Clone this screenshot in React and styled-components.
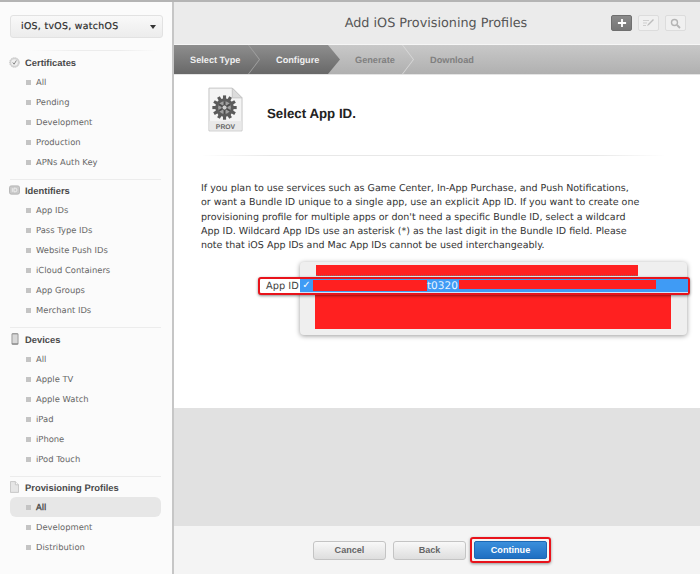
import React from 'react';
import styled, { createGlobalStyle } from 'styled-components';

const GlobalStyle = createGlobalStyle`
  html, body { margin: 0; padding: 0; background: #fff; }
  * { box-sizing: border-box; }
  body { font-family: "DejaVu Sans", "Liberation Sans", sans-serif; text-rendering: geometricPrecision; }
`;

const boldFont = '"Liberation Sans", Arial, sans-serif';

const sections = [
  { name: 'Certificates', icon: 'cert', top: 1, items: ['All', 'Pending', 'Development', 'Production', 'APNs Auth Key'] },
  { name: 'Identifiers', icon: 'id', top: 0, items: ['App IDs', 'Pass Type IDs', 'Website Push IDs', 'iCloud Containers', 'App Groups', 'Merchant IDs'] },
  { name: 'Devices', icon: 'device', top: 1, items: ['All', 'Apple TV', 'Apple Watch', 'iPad', 'iPhone', 'iPod Touch'] },
  { name: 'Provisioning Profiles', icon: 'doc', top: 0, items: ['All', 'Development', 'Distribution'], active: 0 },
];

function SectionIcon({ kind }) {
  if (kind === 'cert') {
    return (
      <svg width="11" height="11" viewBox="0 0 14 14">
        <circle cx="7" cy="7" r="6.2" fill="#d4d4d4" stroke="#c0c0c0" strokeDasharray="1.6 1" />
        <circle cx="7" cy="7" r="4.2" fill="#f0f0f0" />
        <path d="M4.8 7l1.7 2.2L9.4 4.4" fill="none" stroke="#777" strokeWidth="1.1" />
      </svg>
    );
  }
  if (kind === 'id') {
    return (
      <svg width="11" height="10" viewBox="0 0 12 10">
        <rect x="0.5" y="0.5" width="11" height="9" rx="2" fill="#cacaca" stroke="#b4b4b4" />
        <path d="M3.6 3v4M5.4 3v4h1.3a2 2 0 0 0 0-4z" fill="none" stroke="#f4f4f4" strokeWidth="0.9" />
      </svg>
    );
  }
  if (kind === 'device') {
    return (
      <svg width="8" height="12" viewBox="0 0 8 13">
        <rect x="0.3" y="0.3" width="7.4" height="12.4" rx="1.3" fill="#808080" />
        <rect x="1.1" y="1.4" width="5.8" height="9.8" fill="#d8d8d8" />
      </svg>
    );
  }
  return (
    <svg width="9" height="12" viewBox="0 0 10 13">
      <path d="M0.5 0.5h5.5l3.5 3.5v8.5h-9z" fill="#e6e6e6" stroke="#c4c4c4" />
      <path d="M6 0.5v3.5h3.5" fill="#f6f6f6" stroke="#c4c4c4" />
    </svg>
  );
}

function ProvIcon() {
  const teeth = Array.from({ length: 12 }, (_, i) => i * 30);
  return (
    <svg width="35" height="45" viewBox="0 0 36 46">
      <path d="M1 1h24l10 10v34H1z" fill="#f4f4f4" stroke="#c4c4c4" />
      <path d="M25 1v10h10z" fill="#dcdcdc" stroke="#c4c4c4" />
      <g transform="translate(17 21)">
        {teeth.map(a => (
          <rect key={a} x="-1.6" y="-12.5" width="3.2" height="5" fill="#5a5a5a" transform={`rotate(${a})`} />
        ))}
        <circle r="9.6" fill="#5c5c5c" />
        <circle r="6.6" fill="#a0a0a0" />
        <path d="M0-6.6V6.6M-5.7-3.3L5.7 3.3M-5.7 3.3L5.7-3.3" stroke="#4e4e4e" strokeWidth="2" />
        <circle r="2.6" fill="#cfcfcf" stroke="#555" />
      </g>
      <rect x="1.5" y="35" width="33" height="9.5" fill="#e9e9e9" />
      <text x="18" y="43" textAnchor="middle" fontSize="7" fontWeight="700" fill="#666" fontFamily="Liberation Sans, sans-serif">PROV</text>
    </svg>
  );
}

export default function App() {
  return (
    <Page>
      <GlobalStyle />
      <Sidebar>
        <Select>
          <span>iOS, tvOS, watchOS</span>
          <Caret />
        </Select>
        <SelectRule />
        {sections.map(s => (
          <Section key={s.name} $top={s.top}>
            <SectionHead>
              <IconSlot><SectionIcon kind={s.icon} /></IconSlot>
              {s.name}
            </SectionHead>
            {s.items.map((item, i) => (
              <NavItem key={item} $active={s.active === i}>
                <Bullet />
                {item}
              </NavItem>
            ))}
          </Section>
        ))}
      </Sidebar>

      <Main>
        <Header>
          <Title>Add iOS Provisioning Profiles</Title>
          <Tools>
            <ToolButton $on>
              <svg width="10" height="10" viewBox="0 0 11 11"><path d="M5.5 1v9M1 5.5h9" stroke="#fff" strokeWidth="2" /></svg>
            </ToolButton>
            <ToolButton>
              <svg width="13" height="10" viewBox="0 0 13 10"><path d="M1 2.5h6M1 5h4M1 7.5h3" stroke="#cfcfcf" /><path d="M5 8l1-2 5-5 1 1-5 5z" fill="#bdbdbd" /></svg>
            </ToolButton>
            <ToolButton>
              <svg width="11" height="11" viewBox="0 0 11 11"><circle cx="4.5" cy="4.5" r="3" fill="none" stroke="#b4b4b4" strokeWidth="1.4" /><path d="M7 7l3 3" stroke="#b4b4b4" strokeWidth="1.8" /></svg>
            </ToolButton>
          </Tools>
        </Header>

        <Steps>
          <DoneSteps>
            <Step $w={86} $done>Select Type<Chevron $tone="#a0a0a0" /></Step>
            <Step $w={80} $done>Configure</Step>
          </DoneSteps>
          <Step $w={74} $pad={15}>Generate<Chevron $tone="#d8d8d8" /></Step>
          <Step $w={90}>Download</Step>
        </Steps>

        <Content>
          <Intro>
            <ProvIcon />
            <Heading>Select App ID.</Heading>
          </Intro>
          <FadeRule />
          <Copy>
            If you plan to use services such as Game Center, In-App Purchase, and Push Notifications,<br />
            or want a Bundle ID unique to a single app, use an explicit App ID. If you want to create one<br />
            provisioning profile for multiple apps or don't need a specific Bundle ID, select a wildcard<br />
            App ID. Wildcard App IDs use an asterisk (*) as the last digit in the Bundle ID field. Please<br />
            note that iOS App IDs and Mac App IDs cannot be used interchangeably.
          </Copy>
          <Popup>
            <TopRedaction />
            <BottomRedaction />
          </Popup>
          <FieldMark>
            <FieldLabel>App ID</FieldLabel>
            <Option>
              <Tick>✓</Tick>
              <Redact $w={114} />
              <OptionText>t0320</OptionText>
              <Redact $w={197} />
            </Option>
          </FieldMark>
        </Content>

        <GrayBand />

        <Footer>
          <FooterButton>Cancel</FooterButton>
          <FooterButton>Back</FooterButton>
          <ContinueMark>
            <ContinueButton>Continue</ContinueButton>
          </ContinueMark>
        </Footer>
      </Main>
    </Page>
  );
}

const Page = styled.div`
  display: grid;
  grid-template-columns: 174px 1fr;
  grid-template-rows: minmax(0, 1fr);
  width: 700px;
  height: 574px;
  overflow: hidden;
  border-top: 2px solid #b4b4b4;
`;

const Sidebar = styled.aside`
  background: #fbfbfb;
  border-right: 2px solid #c6c6c6;
  padding: 13px 11px 0 10px;
  overflow: hidden;
`;

const Select = styled.div`
  display: flex;
  align-items: center;
  justify-content: space-between;
  height: 23px;
  margin-right: -2px;
  padding: 0 6px 0 10px;
  border: 1px solid #e2e2e2;
  border-radius: 3px;
  background: linear-gradient(#f9f9f9, #ececec);
  font-size: 9.3px;
  letter-spacing: 0.35px;
  color: #2c2c2c;
  -webkit-text-stroke: 0.2px #2c2c2c;
`;

const Caret = styled.i`
  width: 0;
  height: 0;
  border-left: 3.5px solid transparent;
  border-right: 3.5px solid transparent;
  border-top: 4px solid #333;
`;

const SelectRule = styled.div`
  height: 1px;
  margin: 12px 4px 0 20px;
  background: linear-gradient(90deg, #fbfbfb, #ececec 40%, #ececec 70%, #fbfbfb);
`;

const Section = styled.section`
  margin-top: ${p => p.$top}px;
  padding-bottom: 7px;
  border-bottom: 1px solid #ececec;
  &:last-child { border-bottom: 0; }
`;

const SectionHead = styled.div`
  display: flex;
  align-items: center;
  height: 20px;
  font-family: ${boldFont};
  font-size: 9.4px;
  font-weight: 700;
  color: #4a4a4a;
`;

const IconSlot = styled.span`
  display: flex;
  justify-content: center;
  width: 11px;
  margin: 0 5px 0 -1px;
`;

const NavItem = styled.div`
  display: flex;
  align-items: center;
  height: 20px;
  padding-left: 16px;
  border-radius: 6px;
  font-size: 8.4px;
  font-weight: 400;
  color: ${p => (p.$active ? '#4a4a4a' : '#666')};
  -webkit-text-stroke: ${p => (p.$active ? '0.35px #4a4a4a' : '0')};
  background: ${p => (p.$active ? '#e7e7e7' : 'transparent')};
`;

const Bullet = styled.i`
  width: 5px;
  height: 5px;
  margin-right: 5px;
  background: #c4c4c4;
`;

const Main = styled.main`
  display: flex;
  flex-direction: column;
  min-width: 0;
  height: 572px;
`;

const Header = styled.header`
  position: relative;
  display: flex;
  align-items: center;
  justify-content: center;
  height: 43px;
  flex: none;
  padding-right: 2px;
  background: #ebebeb;
  border-bottom: 1px solid #f6f6f6;
`;

const Title = styled.h1`
  margin: 0;
  font-size: 12.8px;
  font-weight: 400;
  color: #555;
`;

const Tools = styled.div`
  position: absolute;
  top: 13px;
  right: 14px;
  display: flex;
  gap: 6px;
`;

const ToolButton = styled.span`
  display: flex;
  align-items: center;
  justify-content: center;
  width: 21px;
  height: 16px;
  border: 1px solid ${p => (p.$on ? '#6f6f6f' : '#dcdcdc')};
  border-radius: 2px;
  background: ${p => (p.$on ? 'linear-gradient(#8a8a8a, #767676)' : '#f0f0f0')};
`;

const Steps = styled.nav`
  display: flex;
  height: 30px;
  flex: none;
  background: linear-gradient(#c8c8c8, #b0b0b0);
  border-bottom: 1px solid #e4e4e4;
`;

const DoneSteps = styled.div`
  display: flex;
  flex: none;
  width: 166px;
  background: linear-gradient(#8e8e8e, #686868);
  clip-path: polygon(0 0, 154px 0, 166px 50%, 154px 100%, 0 100%);
`;

const Step = styled.div`
  position: relative;
  display: flex;
  align-items: center;
  flex: none;
  width: ${p => p.$w}px;
  padding: 0 0 0 ${p => (p.$pad ? p.$pad : 16)}px;
  font-family: ${boldFont};
  font-size: 9.2px;
  font-weight: 700;
  color: ${p => (p.$done ? '#f0f0f0' : '#808080')};
  white-space: nowrap;
`;

const Chevron = styled.i`
  position: absolute;
  top: 0;
  right: 0;
  bottom: 0;
  width: 12px;
  background: ${p => p.$tone};
  clip-path: polygon(0 0, 1px 0, 100% 50%, 1px 100%, 0 100%, calc(100% - 1px) 50%);
`;

const Content = styled.div`
  position: relative;
  flex: none;
  height: 333px;
  background: #fff;
  padding: 12px 0 0 27px;
`;

const Intro = styled.div`
  display: flex;
  align-items: center;
  gap: 24px;
  margin-left: 7px;
`;

const Heading = styled.h2`
  margin: 8px 0 0;
  font-family: ${boldFont};
  font-size: 13.3px;
  font-weight: 700;
  color: #222;
`;

const FadeRule = styled.div`
  width: 465px;
  height: 1px;
  margin-top: 23px;
  background: linear-gradient(90deg, #fff, #e8e8e8 15%, #e8e8e8 85%, #fff);
`;

const Copy = styled.p`
  margin: 26px 0 0;
  font-size: 9.5px;
  line-height: 14.25px;
  color: #333;
  white-space: nowrap;
`;

const Popup = styled.div`
  position: absolute;
  top: 187px;
  left: 126px;
  width: 387px;
  height: 73px;
  border-radius: 4px;
  background: #efefef;
  box-shadow: 0 1px 5px rgba(0, 0, 0, 0.4);
`;

const TopRedaction = styled.div`
  position: absolute;
  top: 3px;
  left: 16px;
  width: 322px;
  height: 11px;
  background: #ff2020;
  border-bottom: 1px dotted #8a6a6a;
`;

const BottomRedaction = styled.div`
  position: absolute;
  top: 33px;
  left: 15px;
  width: 356px;
  height: 34px;
  background: #ff2020;
`;

const FieldMark = styled.div`
  position: absolute;
  top: 202px;
  left: 84px;
  display: flex;
  width: 432px;
  height: 18px;
  border: 2px solid #e8131b;
  border-radius: 3px;
  box-shadow: 0 1px 3px rgba(0, 0, 0, 0.45);
  background: #fff;
`;

const FieldLabel = styled.span`
  display: flex;
  align-items: center;
  flex: none;
  width: 40px;
  padding-left: 6px;
  font-size: 9.8px;
  color: #444;
  white-space: nowrap;
`;

const Option = styled.div`
  display: flex;
  align-items: stretch;
  flex: 1;
  background: #3f9bf5;
  border-bottom: 1px solid #cfe4fa;
`;

const Tick = styled.span`
  display: flex;
  align-items: center;
  justify-content: center;
  width: 13px;
  font-size: 10px;
  font-weight: 700;
  color: #fff;
`;

const Redact = styled.div`
  flex: none;
  width: ${p => p.$w}px;
  margin: 1px 0 ${p => (p.$w < 150 ? 1 : 3)}px;
  background: #ff2020;
`;

const OptionText = styled.span`
  display: flex;
  align-items: center;
  width: 32px;
  font-size: 10.5px;
  color: #eaf4ff;
`;

const GrayBand = styled.div`
  flex: 1;
  background: #e1e1e1;
`;

const Footer = styled.footer`
  display: flex;
  align-items: center;
  height: 48px;
  flex: none;
  padding-left: 139px;
  gap: 7px;
  background: #f4f4f4;
`;

const FooterButton = styled.button`
  width: 73px;
  height: 19px;
  padding: 0;
  border: 1px solid #c4c4c4;
  border-radius: 3px;
  background: linear-gradient(#f8f8f8, #dedede);
  font-family: ${boldFont};
  font-size: 9.1px;
  font-weight: 700;
  color: #666;
`;

const ContinueMark = styled.div`
  display: flex;
  align-items: center;
  justify-content: center;
  width: 81px;
  height: 26px;
  margin-left: -3px;
  border: 2px solid #e8131b;
  border-radius: 3px;
  box-shadow: 0 1px 3px rgba(0, 0, 0, 0.4);
`;

const ContinueButton = styled.button`
  width: 73px;
  height: 18px;
  padding: 0;
  border: 1px solid #1c68b4;
  border-radius: 2px;
  background: linear-gradient(#3a8fdc, #1f6fc2);
  font-family: ${boldFont};
  font-size: 9.1px;
  font-weight: 700;
  color: #fff;
`;
